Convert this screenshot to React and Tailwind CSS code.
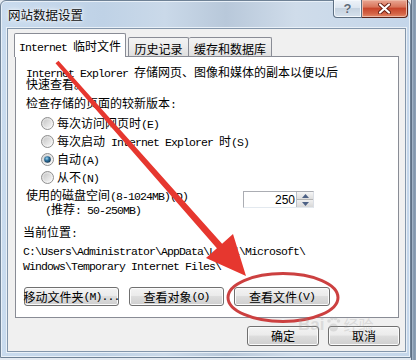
import React from "react";

const CJK = "font-['Noto_Sans_CJK_SC',sans-serif]";

function L({ children }) {
  return (
    <span className="font-['Liberation_Mono',monospace] text-[11.5px] leading-[0] tracking-[-0.9px]">
      {children}
    </span>
  );
}

function Radio({ checked }) {
  return (
    <svg width="13" height="13" viewBox="0 0 13 13" className="shrink-0">
      <defs>
        <linearGradient id="rgOuter" x1="0" y1="0" x2="1" y2="1">
          <stop offset="0" stopColor="#d4d4d4" />
          <stop offset="1" stopColor="#ffffff" />
        </linearGradient>
        <linearGradient id="rgInner" x1="0" y1="0" x2="1" y2="1">
          <stop offset="0" stopColor="#c8c8c8" />
          <stop offset="1" stopColor="#f4f4f4" />
        </linearGradient>
        <radialGradient id="rgDot" cx="0.4" cy="0.35" r="0.7">
          <stop offset="0" stopColor="#9fd6ee" />
          <stop offset="0.45" stopColor="#2f73a0" />
          <stop offset="1" stopColor="#0f2f4a" />
        </radialGradient>
      </defs>
      <circle cx="6.5" cy="6.5" r="6" fill="url(#rgOuter)" stroke="#8f8f8f" strokeWidth="1" />
      <circle cx="6.5" cy="6.5" r="4" fill="url(#rgInner)" />
      {checked && <circle cx="6.5" cy="6.5" r="3.3" fill="url(#rgDot)" />}
    </svg>
  );
}

const btn =
  "h-[19px] flex items-center justify-center rounded-[3px] border border-[#707070] bg-[linear-gradient(180deg,#f3f3f3_0%,#ebebeb_45%,#dddddd_50%,#cfcfcf_100%)] shadow-[inset_0_0_0_1px_#fbfbfb] whitespace-nowrap text-[12px] leading-[12px] text-black";

export default function App() {
  return (
    <div className={`w-[416px] h-[360px] flex bg-[#e4eaf1] overflow-hidden relative ${CJK} text-black`}>
      {/* window */}
      <div className="w-[411px] h-[358px] shrink-0 flex flex-col rounded-t-[6px] border border-[#6f8296] bg-[linear-gradient(90deg,#c9dbee_0%,#bfd2e6_25%,#cad9e9_40%,#b8c8da_55%,#cfdcea_72%,#c4d6ea_100%)] pl-[6px] pr-[4px] pb-[5px] shadow-[inset_0_0_0_1px_#e8f0f8]">
        {/* title bar */}
        <div className="h-[27px] flex items-center shrink-0">
          <div className="pl-[1px] text-[12.5px] leading-[13px] text-[#111] [text-shadow:0_0_6px_#ffffff,0_0_3px_#ffffff]">
            网站数据设置
          </div>
          <div className="ml-auto self-start -mt-px -mr-[2px] flex h-[18px]">
            <div className="w-[29px] h-[18px] flex items-center justify-center rounded-bl-[4px] border border-t-0 border-[#5d6f82] bg-[linear-gradient(180deg,#eef3f9_0%,#dde6f0_45%,#c5d2e0_50%,#d6e1ec_100%)] shadow-[inset_0_0_0_1px_#f4f8fc]">
              <span className="font-['Liberation_Sans',sans-serif] font-bold text-[13px] leading-[13px] text-[#5c6a7a] [text-shadow:0_0_1px_#ffffff]">
                ?
              </span>
            </div>
            <div className="w-[46px] h-[18px] flex items-center justify-center rounded-br-[4px] border border-l-0 border-t-0 border-[#5a2218] bg-[linear-gradient(180deg,#e9a794_0%,#d9765c_40%,#c8462c_50%,#d46446_80%,#e48a6a_100%)] shadow-[inset_0_0_0_1px_#eeb9a6]">
              <svg width="13" height="11" viewBox="0 0 13 11">
                <path d="M2 1.5 L11 9.5 M11 1.5 L2 9.5" stroke="#6a2014" strokeWidth="4" strokeLinecap="round" />
                <path d="M2 1.5 L11 9.5 M11 1.5 L2 9.5" stroke="#ffffff" strokeWidth="2.2" strokeLinecap="round" />
              </svg>
            </div>
          </div>
        </div>

        {/* client area */}
        <div className="flex-1 flex flex-col bg-[#f0f0f0] border border-[#8396ab] shadow-[0_0_0_1px_#e9f0f7] pl-[7px] pr-[6px]">
          {/* tabs */}
          <div className="h-[27px] flex items-end shrink-0 -ml-px">
            <div className="relative z-10 -mb-px h-[24px] w-[112px] flex items-center justify-center bg-white border border-b-0 border-[#898c95] rounded-t-[2px] text-[12px] leading-[12px]">
              <span className="whitespace-pre">
                <L>Internet </L>临时文件
              </span>
            </div>
            <div className="ml-[2px] h-[19px] w-[61px] flex items-center justify-center pt-[3px] bg-[linear-gradient(180deg,#f3f3f3_0%,#ebebeb_50%,#dfdfdf_100%)] border border-b-0 border-[#898c95] rounded-t-[2px] text-[12px] leading-[12px]">
              历史记录
            </div>
            <div className="h-[19px] w-[83px] flex items-center justify-center pt-[3px] bg-[linear-gradient(180deg,#f3f3f3_0%,#ebebeb_50%,#dfdfdf_100%)] border border-b-0 border-l-0 border-[#898c95] rounded-t-[2px] text-[12px] leading-[12px]">
              缓存和数据库
            </div>
          </div>

          {/* panel */}
          <div className="h-[262px] shrink-0 flex flex-col bg-white border border-[#898c95] text-[12px] leading-[12px]">
            <div className="h-[12px] mt-[9px] ml-[10px] whitespace-pre">
              <L>Internet Explorer </L>存储网页、图像和媒体的副本以便以后
            </div>
            <div className="h-[12px] ml-[10px]">快速查看。</div>
            <div className="h-[12px] mt-[7px] ml-[10px]">
              检查存储的页面的较新版本<L>:</L>
            </div>
            <div className="mt-[5px] ml-[25px] flex flex-col">
              <div className="h-[18px] flex items-center gap-[3px]">
                <Radio />
                <span className="h-[12px]">
                  每次访问网页时<L>(E)</L>
                </span>
              </div>
              <div className="h-[18px] flex items-center gap-[3px]">
                <Radio />
                <span className="h-[12px] whitespace-pre">
                  每次启动<L> Internet Explorer </L>时<L>(S)</L>
                </span>
              </div>
              <div className="h-[18px] flex items-center gap-[3px]">
                <Radio checked />
                <span className="h-[12px]">
                  自动<L>(A)</L>
                </span>
              </div>
              <div className="h-[18px] flex items-center gap-[3px]">
                <Radio />
                <span className="h-[12px]">
                  从不<L>(N)</L>
                </span>
              </div>
            </div>

            <div className="mt-[2px] ml-[10px] flex h-[28px]">
              <div className="flex flex-col leading-[14px]">
                <div className="h-[14px] whitespace-pre">
                  使用的磁盘空间<L>(8-1024MB)(D)</L>
                </div>
                <div className="h-[14px] ml-[19px] whitespace-pre">
                  <L>(</L>推荐<L>: 50-250MB)</L>
                </div>
              </div>
              <div className="ml-auto mr-[84px] mt-[3px] w-[71px] h-[17px] flex border border-[#abadb3] border-b-[#e3e9ef] border-r-[#dbdfe6] bg-white">
                <div className="flex-1 flex items-center justify-end pr-[1px] font-['Liberation_Sans',sans-serif] text-[12px] leading-[12px]">
                  250
                </div>
                <div className="w-[17px] flex flex-col border-l border-[#b9bfc7]">
                  <div className="flex-1 flex items-center justify-center bg-[linear-gradient(180deg,#f6f6f6,#dedede)] border-b border-[#b5b5b5]">
                    <svg width="7" height="4" viewBox="0 0 7 4">
                      <path d="M0 4 L3.5 0 L7 4 Z" fill="#4d6185" />
                    </svg>
                  </div>
                  <div className="flex-1 flex items-center justify-center bg-[linear-gradient(180deg,#f0f0f0,#d8d8d8)]">
                    <svg width="7" height="4" viewBox="0 0 7 4">
                      <path d="M0 0 L3.5 4 L7 0 Z" fill="#4d6185" />
                    </svg>
                  </div>
                </div>
              </div>
            </div>

            <div className="h-[12px] mt-[10px] ml-[7px]">
              当前位置<L>:</L>
            </div>
            <div className="mt-[4px] ml-[7px] flex flex-col leading-[15px] whitespace-pre">
              <div className="h-[15px]">
                <L>{"C:\\Users\\Administrator\\AppData\\Local\\Microsoft\\"}</L>
              </div>
              <div className="h-[15px]">
                <L>{"Windows\\Temporary Internet Files\\"}</L>
              </div>
            </div>

            <div className="mt-[15px] ml-[8px] flex gap-[10px]">
              <div className={`${btn} w-[95px]`}>
                移动文件夹<L>(M)...</L>
              </div>
              <div className={`${btn} w-[95px]`}>
                查看对象<L>(O)</L>
              </div>
              <div className={`${btn} w-[96px]`}>
                查看文件<L>(V)</L>
              </div>
            </div>
          </div>

          {/* OK / Cancel */}
          <div className="mt-[8px] -mr-px flex justify-end gap-[9px]">
            <div className={`${btn} w-[72px] h-[20px] border-[#3c7fb1] shadow-[inset_0_0_0_1px_#9fdcf6]`}>确定</div>
            <div className={`${btn} w-[72px] h-[20px]`}>取消</div>
          </div>
        </div>
      </div>

      {/* background strip on the right */}
      <div className="flex-1 h-full border-l border-[#5f7084] bg-[linear-gradient(90deg,#aebfd1,#7e92a8_50%,#93a6bb)]" />

      {/* annotations overlay */}
      <svg className="absolute inset-0 pointer-events-none" width="416" height="360" viewBox="0 0 416 360">
        <polygon
          points="58.5,60.7 222.1,243.7 233,234.1 246,276 206,257.9 216.9,248.3 55.5,63.3"
          fill="#e6372f"
        />
        <ellipse cx="283" cy="297.5" rx="55" ry="24" fill="none" stroke="#cc4040" strokeWidth="3" />
      </svg>

      {/* watermark */}
      <div className="absolute left-[298px] top-[316px] flex items-center gap-[1px] opacity-25 pointer-events-none">
        <span className="font-['Liberation_Sans',sans-serif] font-bold text-[17px] leading-[17px] text-[#9a9a9a]">
          Bai
        </span>
        <svg width="17" height="17" viewBox="0 0 17 17">
          <ellipse cx="8.5" cy="11.5" rx="4.5" ry="4" fill="#9a9a9a" />
          <circle cx="4" cy="5" r="1.8" fill="#9a9a9a" />
          <circle cx="7" cy="2.5" r="1.8" fill="#9a9a9a" />
          <circle cx="10.5" cy="2.5" r="1.8" fill="#9a9a9a" />
          <circle cx="13.5" cy="5" r="1.8" fill="#9a9a9a" />
        </svg>
        <span className="text-[15px] leading-[15px] text-[#9a9a9a]">经验</span>
      </div>
    </div>
  );
}
